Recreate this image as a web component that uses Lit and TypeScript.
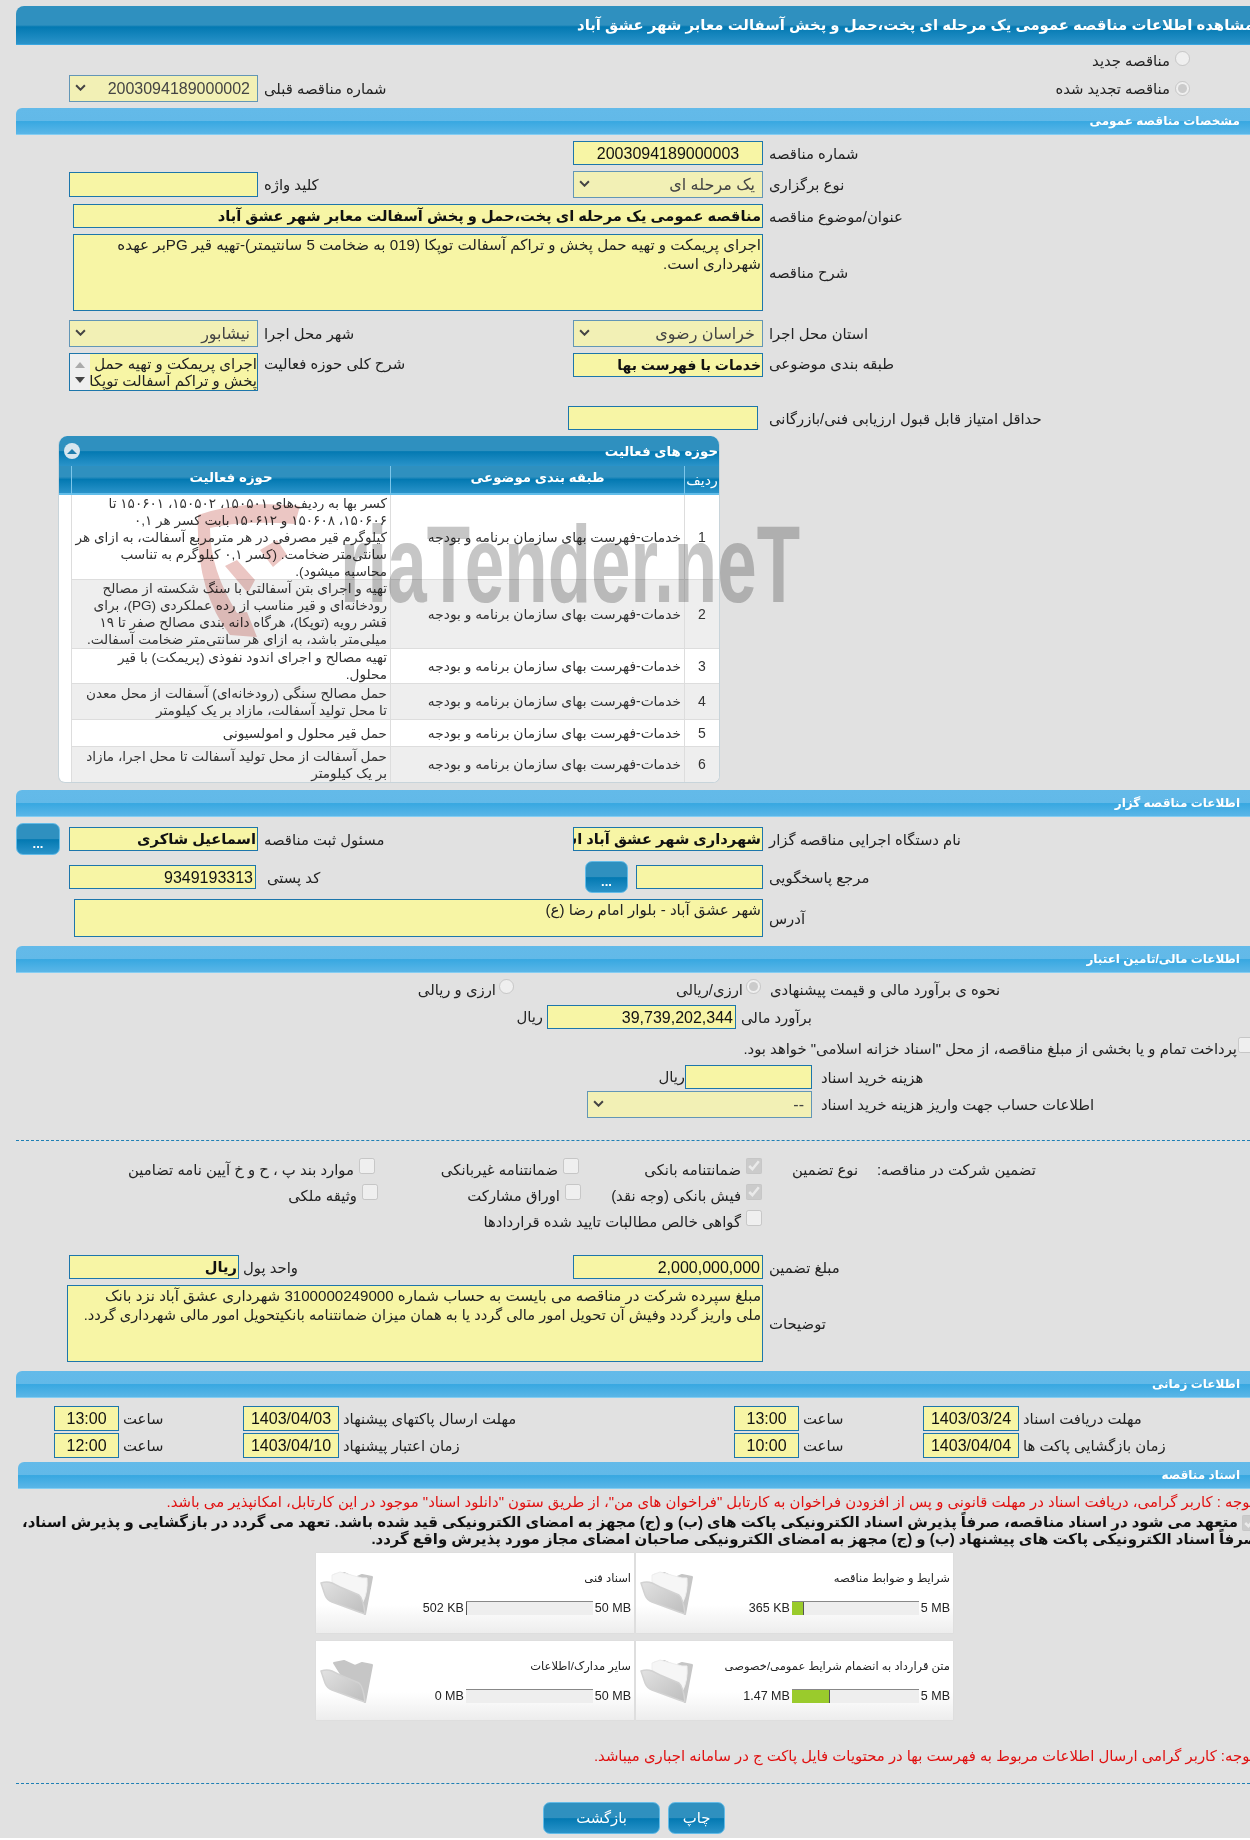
import { LitElement, html, css, svg } from "lit";
import { customElement } from "lit/decorators.js";

const TABLE_ROWS = [
  ["1", "کسر بها به ردیف‌های ۱۵۰۵۰۱، ۱۵۰۵۰۲، ۱۵۰۶۰۱ تا\n۱۵۰۶۰۶، ۱۵۰۶۰۸ و ۱۵۰۶۱۲ بابت کسر هر ۰,۱\nکیلوگرم قیر مصرفی در هر مترمربع آسفالت، به ازای هر\nسانتی‌متر ضخامت. (کسر ۰,۱ کیلوگرم به تناسب\nمحاسبه میشود).", "h85"],
  ["2", "تهیه و اجرای بتن آسفالتی با سنگ شکسته از مصالح\nرودخانه‌ای و قیر مناسب از رده عملکردی (PG)، برای\nقشر رویه (توپکا)، هرگاه دانه بندی مصالح صفر تا ۱۹\nمیلی‌متر باشد، به ازای هر سانتی‌متر ضخامت آسفالت.", "h69"],
  ["3", "تهیه مصالح و اجرای اندود نفوذی (پریمکت) با قیر\nمحلول.", "h35"],
  ["4", "حمل مصالح سنگی (رودخانه‌ای) آسفالت از محل معدن\nتا محل تولید آسفالت، مازاد بر یک کیلومتر", "h36"],
  ["5", "حمل قیر محلول و امولسیونی", "h27"],
  ["6", "حمل آسفالت از محل تولید آسفالت تا محل اجرا، مازاد\nبر یک کیلومتر", "h36"],
];

const DOCS = [
  { title: "شرایط و ضوابط مناقصه", used: "365 KB", max: "5 MB", fill: 12, paper: true },
  { title: "اسناد فنی", used: "502 KB", max: "50 MB", fill: 1, paper: true },
  { title: "متن قرارداد به انضمام شرایط عمومی/خصوصی", used: "1.47 MB", max: "5 MB", fill: 38, paper: true },
  { title: "سایر مدارک/اطلاعات", used: "0 MB", max: "50 MB", fill: 0, paper: false },
];

const folder = (paper: boolean) => svg`
  <svg class="folder" viewBox="-1 -2 54 46" aria-hidden="true">
    <defs>
      <linearGradient id="fg" x1="0" y1="0" x2="1" y2="1">
        <stop offset="0" stop-color="#e2e2e2" /><stop offset="1" stop-color="#bdbdbd" />
      </linearGradient>
    </defs>
    <path d="M13 3 L23 1 L34 6 L41 3 L51 5 L44 42 L30 30 Z" fill="#c6c6c6" stroke="#c6c6c6" stroke-width="2" stroke-linejoin="round" />
    ${paper
      ? svg`<path d="M11 3 L19 0 L41 6 L46 6 Q47 20 42 30 L28 23 L11 10 Z" fill="#f6f6f6" stroke="#eeeeee" stroke-width="1" stroke-linejoin="round" />`
      : svg``}
    <path d="M0 11 Q6 9 11 11 L19 15 L38 23 Q42 26 44 42 L38 40 L11 30 Q6 28 4 23 Z" fill="url(#fg)" stroke="#d2d2d2" stroke-width="1.5" stroke-linejoin="round" />
  </svg>`;

const chevron = html`<svg class="chev" viewBox="0 0 10 6" aria-hidden="true"><path d="M1 1 L5 5 L9 1" fill="none" stroke="#444" stroke-width="1.8" /></svg>`;

@customElement("app-root")
export class AppRoot extends LitElement {
  static styles = css`
    :host { display: block; width: 1250px; height: 1840px; overflow: hidden; background: #fff; font-family: "Liberation Sans", "DejaVu Sans", sans-serif; color: #222; font-size: 14.85px; }
    * { box-sizing: border-box; }
    .page { position: relative; width: 1250px; height: 1838px; padding-top: 6px; background: #e1e1e1; overflow: hidden; }

    .title { height: 39px; margin-left: 16px; display: flex; align-items: center; justify-content: flex-start; direction: rtl; overflow: hidden; border-radius: 8px 0 0 0; color: #fff; font-size: 14.85px; font-weight: bold; white-space: nowrap; border-bottom: 1px solid #39a6e0; background: linear-gradient(#2f90bf 0, #2f90bf 50%, #0379b2 55%, #2a93c9 100%); }
    .title span { margin-right: -4px; padding-bottom: 1px; }
    .bar { height: 27px; margin-left: 16px; display: flex; align-items: center; direction: rtl; padding-right: 10px; border-radius: 6px 0 0 0; color: #fff; font-size: 12px; font-weight: bold; white-space: nowrap; border-bottom: 1px solid #84cdf2; background: linear-gradient(#63bae9 0, #62b9e8 50%, #38a8e1 52%, #5ab6e7 100%); }
    .bar.docs { margin-left: 18px; }

    .row { display: grid; align-items: center; direction: ltr; }
    .top2 { grid-template-columns: 69px 189px 1fr 300px; }
    .std { grid-template-columns: 69px 189px 315px 190px 1fr; }
    .std170 { grid-template-columns: 69px 170px 334px 190px 1fr; }
    .w73 { grid-template-columns: 73px 690px 1fr; }
    .w74 { grid-template-columns: 74px 689px 1fr; }
    .w67 { grid-template-columns: 67px 696px 1fr; }
    .minscore { grid-template-columns: 568px 190px 1fr; }
    .ref { grid-template-columns: 69px 187px 329px 43px 8px 127px 1fr; }
    .radios { grid-template-columns: 514px 247px 1fr; align-items: start; }
    .radios .opt { align-items: flex-start; gap: 3px; }
    .radios span, .radios .lbl { padding-top: 2px; }
    .estimate { grid-template-columns: 547px 189px 1fr; }
    .fee { grid-template-columns: 685px 127px 1fr; }
    .account { grid-template-columns: 587px 225px 1fr; }
    .times { grid-template-columns: 54px 65px 124px 96px 395px 65px 124px 96px 1fr; }
    .g1 { grid-template-columns: 375px 204px 183px 26px 85px 1fr; align-items: start; }
    .g2 { grid-template-columns: 378px 203px 181px 1fr; align-items: start; }
    .g1 .opt, .g2 .opt { align-items: flex-start; }
    .g1 span, .g2 span, .g1 .lbl { padding-top: 3px; }
    .start { align-items: start; }

    .mt2 { margin-top: 2px; } .mt3 { margin-top: 3px; } .mt4 { margin-top: 4px; } .mt5 { margin-top: 5px; } .mt6 { margin-top: 6px; } .mt7 { margin-top: 7px; } .mt8 { margin-top: 8px; } .mt9 { margin-top: 9px; } .mt15 { margin-top: 15px; } .mt17 { margin-top: 17px; } .mt18 { margin-top: 18px; } .mt19 { margin-top: 19px; } .mt22 { margin-top: 22px; } .mt26 { margin-top: 26px; }

    .lbl { direction: rtl; text-align: left; white-space: nowrap; padding-left: 6px; padding-top: 1px; }
    .lbl.p4 { padding-left: 4px; } .lbl.p5 { padding-left: 5px; } .lbl.p9 { padding-left: 9px; } .lbl.p11 { padding-left: 11px; }
    .lbl.top { padding-top: 2px; }
    .rial { direction: rtl; text-align: right; padding-right: 4px; white-space: nowrap; }
    .rial.flush { padding-right: 0; }

    .f { direction: rtl; display: flex; align-items: center; border: 1.5px solid #1d76ab; background: #f7f5a5; color: #111; font-size: 16px; white-space: nowrap; overflow: hidden; padding: 0 1px; line-height: 17px; }
    .f.center { justify-content: center; }
    .f.bold { font-weight: bold; font-size: 14.67px; }
    .f.b14 { font-size: 14px; }
    .f.ltr-num { padding-right: 2px; }
    .h24 { height: 24px; } .h25 { height: 25px; } .h26 { height: 26px; } .h30 { height: 30px; }
    .sel { height: 27px; direction: rtl; display: flex; align-items: center; justify-content: space-between; border: 1.5px solid #6396b6; background: #f2f0b5; color: #444; font-size: 16px; padding: 0 7px 0 5px; white-space: nowrap; }
    .chev { width: 11px; height: 7px; flex: none; margin-bottom: 2px; }
    .area { direction: rtl; border: 1.5px solid #1d76ab; background: #f7f5a5; color: #222; font-size: 15.1px; line-height: 18.5px; padding: 1px; overflow: hidden; white-space: pre; }
    .tight { font-size: 14.6px; }
    .h77 { height: 77px; } .h38 { height: 38px; }
    .listbox { height: 38px; direction: rtl; display: flex; border: 1.5px solid #1d76ab; background: #f7f5a5; overflow: hidden; }
    .listbox .txt { flex: 1; font-size: 15px; line-height: 17px; color: #222; white-space: nowrap; padding: 1px 0 0 0; overflow: hidden; }
    .scroll { width: 20px; flex: none; background: #efefef; display: flex; flex-direction: column; align-items: center; justify-content: space-around; padding: 3px 0; }
    .tri { width: 0; height: 0; border-left: 5px solid transparent; border-right: 5px solid transparent; }
    .tri.up { border-bottom: 6px solid #aaa; }
    .tri.down { border-top: 6px solid #444; }

    .opt { display: flex; justify-content: flex-end; align-items: center; gap: 5px; direction: ltr; white-space: nowrap; }
    .opt span { direction: rtl; }
    .opt.rad { padding-right: 60px; align-items: flex-start; }
    .opt.rad span { padding-top: 7px; }
    .opt.rad input { margin-top: 6px; }
    .opt.renew { padding-right: 60px; }
    .opt.renew span { padding-top: 1px; }
    input { margin: 0; flex: none; width: 15px; height: 15px; }
    input[type="checkbox"] { width: 16px; height: 16px; }
    .treasury { display: flex; justify-content: flex-end; align-items: flex-start; gap: 1px; height: 20px; margin-right: -4px; white-space: nowrap; }
    .treasury span { direction: rtl; padding-top: 3px; }

    .btn { display: flex; align-items: center; justify-content: center; color: #fff; border: 1.5px solid #63bbe7; border-radius: 7px; background: linear-gradient(#2f90bf 0, #2f90bf 50%, #0379b2 52%, #2a93c9 100%); font-size: 14.85px; direction: rtl; }
    .dots { width: 44px; height: 32px; margin-left: 16px; font-weight: bold; font-size: 13px; padding-top: 8px; }
    .ref .dots { margin-left: 0; width: 43px; }

    .dash { height: 0; margin-left: 16px; border-top: 1.5px dashed #1d7fb5; }

    .box { position: relative; width: 662px; height: 347px; margin-left: 58px; background: #fff; border-radius: 9px 9px 7px 7px; border: 1px solid #c8d4da; border-top: 0; overflow: hidden; }
    .boxhead { height: 30px; display: flex; align-items: center; justify-content: space-between; padding: 0 1px 0 5px; direction: ltr; color: #fff; font-weight: bold; font-size: 13.33px; background: linear-gradient(#2f90bf 0, #2f90bf 50%, #0379b2 52%, #2a93c9 100%); }
    .boxhead span { direction: rtl; }
    .toggle { width: 16px; height: 16px; border-radius: 50%; background: #d7e6ef; display: flex; align-items: center; justify-content: center; }
    .toggle i { width: 0; height: 0; border-left: 5px solid transparent; border-right: 5px solid transparent; border-bottom: 5px solid #1f7dad; }
    .tgrid { display: grid; grid-template-columns: 12px 319px 294px 1fr; direction: ltr; }
    .th { height: 29px; display: flex; align-items: center; justify-content: center; color: #fff; font-weight: bold; font-size: 13.33px; padding-bottom: 5px; border-left: 1px solid #7cc6ea; border-bottom: 2px solid #62bde9; background: linear-gradient(#2f90bf 0, #2f90bf 40%, #0379b2 50%, #2a93c9 100%); direction: rtl; }
    .th.first { border-left: 0; }
    .th.no { padding-bottom: 0; font-weight: normal; font-size: 14px; }
    .td { display: flex; align-items: center; direction: rtl; border-left: 1px solid #ddd; border-bottom: 1px solid #ddd; color: #333; font-size: 13.6px; line-height: 17px; padding: 0 3px 0 0; overflow: hidden; white-space: pre; }
    .td.c1 { border-left: 0; background: transparent; border-bottom: 0; }
    .td.num { justify-content: center; font-size: 14px; padding: 0; }
    .td.alt { background: #eeeeee; }
    .td.cat { padding-right: 3px; white-space: nowrap; font-size: 13.8px; }
    .h85 { height: 85px; } .h69 { height: 69px; } .h35 { height: 35px; } .h36 { height: 36px; } .h27 { height: 27px; }

    .wm { position: absolute; left: 195px; top: 500px; width: 620px; height: 140px; mix-blend-mode: multiply; pointer-events: none; display: flex; align-items: flex-start; direction: ltr; }
    .wm svg { width: 125px; height: 140px; flex: none; }
    .wm span { font-size: 110px; line-height: 110px; font-weight: bold; color: #c6c6c6; white-space: nowrap; transform: scaleX(.645); transform-origin: left top; margin-left: 20px; margin-top: 9px; }

    .note { direction: rtl; color: #e01010; font-size: 14.88px; line-height: 20px; white-space: nowrap; margin-right: -4px; }
    .commit { direction: rtl; font-weight: bold; color: #111; font-size: 14.9px; line-height: 17px; margin: 2px -8px 0 20px; }
    .commit input { vertical-align: middle; margin-left: 4px; }
    .cards { display: grid; grid-template-columns: 318px 317px; grid-template-rows: 80px 79px; gap: 8px 2px; margin-left: 316px; direction: ltr; }
    .card { display: grid; grid-template-columns: 60px 1fr; direction: ltr; background: linear-gradient(#fff 0, #fff 65%, #ededed 100%); box-shadow: 0 0 1px #ccc; }
    .folder { width: 54px; height: 48px; margin: 16px 0 0 4px; }
    .cinfo { padding: 17px 3px 0 0; display: flex; flex-direction: column; align-items: flex-end; }
    .ctitle { direction: rtl; font-size: 11.5px; color: #222; line-height: 16px; white-space: nowrap; }
    .pr { margin-top: 15px; display: flex; align-items: center; gap: 2px; font-size: 12.5px; color: #222; }
    .track { width: 127px; height: 14px; background: #eeeeee; border-top: 1px solid #888; display: flex; }
    .fillbar { height: 100%; background: #9acb2c; border-right: 1px solid #555; }
    .actions { display: flex; margin-left: 543px; gap: 8px; direction: ltr; }
    .a1 { width: 117px; height: 32px; } .a2 { width: 57px; height: 32px; }
  `;

  private sel(text: string) {
    return html`<div class="sel"><span>${text}</span>${chevron}</div>`;
  }

  render() {
    return html`
      <div class="page">
        <div class="title"><span>مشاهده اطلاعات مناقصه عمومی یک مرحله ای پخت،حمل و پخش آسفالت معابر شهر عشق آباد</span></div>

        <div class="opt rad h30">
          <span>مناقصه جدید</span><input type="radio" disabled />
        </div>
        <div class="row top2">
          <div></div>
          ${this.sel("2003094189000002")}
          <div class="lbl">شماره مناقصه قبلی</div>
          <div class="opt renew"><span>مناقصه تجدید شده</span><input type="radio" disabled checked /></div>
        </div>

        <div class="bar mt6">مشخصات مناقصه عمومی</div>

        <div class="row std mt6">
          <div></div><div></div><div></div>
          <div class="f center h24">2003094189000003</div>
          <div class="lbl">شماره مناقصه</div>
        </div>
        <div class="row std mt6">
          <div></div>
          <div class="f h25"></div>
          <div class="lbl">کلید واژه</div>
          ${this.sel("یک مرحله ای")}
          <div class="lbl">نوع برگزاری</div>
        </div>
        <div class="row w73 mt6">
          <div></div>
          <div class="f bold h24">مناقصه عمومی یک مرحله ای پخت،حمل و پخش آسفالت معابر شهر عشق آباد</div>
          <div class="lbl">عنوان/موضوع مناقصه</div>
        </div>
        <div class="row w73 mt6">
          <div></div>
          <div class="area h77">${"اجرای پریمکت و تهیه حمل پخش و تراکم آسفالت توپکا (019 به ضخامت 5 سانتیمتر)-تهیه قیر PGبر عهده\nشهرداری است."}</div>
          <div class="lbl">شرح مناقصه</div>
        </div>
        <div class="row std mt9">
          <div></div>
          ${this.sel("نیشابور")}
          <div class="lbl">شهر محل اجرا</div>
          ${this.sel("خراسان رضوی")}
          <div class="lbl">استان محل اجرا</div>
        </div>
        <div class="row std start mt6">
          <div></div>
          <div class="listbox"><div class="txt">اجرای پریمکت و تهیه حمل<br />پخش و تراکم آسفالت توپکا</div><div class="scroll"><i class="tri up"></i><i class="tri down"></i></div></div>
          <div class="lbl top">شرح کلی حوزه فعالیت</div>
          <div class="f bold b14 h24">خدمات با فهرست بها</div>
          <div class="lbl top">طبقه بندی موضوعی</div>
        </div>
        <div class="row minscore mt15">
          <div></div>
          <div class="f h24"></div>
          <div class="lbl p11">حداقل امتیاز قابل قبول ارزیابی فنی/بازرگانی</div>
        </div>

        <div class="box mt6">
          <div class="boxhead"><div class="toggle"><i></i></div><span>حوزه های فعالیت</span></div>
          <div class="tgrid">
            <div class="th first"></div>
            <div class="th">حوزه فعالیت</div>
            <div class="th">طبقه بندی موضوعی</div>
            <div class="th no">ردیف</div>
            ${TABLE_ROWS.map(
              ([n, text, h], i) => html`
                <div class="td c1 ${h}"></div>
                <div class="td ${h} ${i % 2 ? "alt" : ""}"><span>${text}</span></div>
                <div class="td cat ${h} ${i % 2 ? "alt" : ""}">خدمات-فهرست بهای سازمان برنامه و بودجه</div>
                <div class="td num ${h} ${i % 2 ? "alt" : ""}">${n}</div>
              `
            )}
          </div>
        </div>

        <div class="bar mt7">اطلاعات مناقصه گزار</div>
        <div class="row std mt6">
          <div class="btn dots">...</div>
          <div class="f bold h24">اسماعیل شاکری</div>
          <div class="lbl">مسئول ثبت مناقصه</div>
          <div class="f bold h24">شهرداری شهر عشق آباد استان خراسان رضوی</div>
          <div class="lbl">نام دستگاه اجرایی مناقصه گزار</div>
        </div>
        <div class="row ref mt6">
          <div></div>
          <div class="f ltr-num h24">9349193313</div>
          <div class="lbl p11">کد پستی</div>
          <div class="btn dots">...</div>
          <div></div>
          <div class="f h24"></div>
          <div class="lbl">مرجع پاسخگویی</div>
        </div>
        <div class="row w74 mt6">
          <div></div>
          <div class="area h38">شهر عشق آباد - بلوار امام رضا (ع)</div>
          <div class="lbl">آدرس</div>
        </div>

        <div class="bar mt9">اطلاعات مالی/تامین اعتبار</div>
        <div class="row radios mt6 h24">
          <div class="opt"><span>ارزی و ریالی</span><input type="radio" disabled /></div>
          <div class="opt"><span>ارزی/ریالی</span><input type="radio" disabled checked /></div>
          <div class="lbl p9">نحوه ی برآورد مالی و قیمت پیشنهادی</div>
        </div>
        <div class="row estimate mt2">
          <div class="rial">ریال</div>
          <div class="f ltr-num h24">39,739,202,344</div>
          <div class="lbl p5">برآورد مالی</div>
        </div>
        <div class="treasury mt8">
          <span>پرداخت تمام و یا بخشی از مبلغ مناقصه، از محل "اسناد خزانه اسلامی" خواهد بود.</span>
          <input type="checkbox" disabled />
        </div>
        <div class="row fee mt8">
          <div class="rial flush">ریال</div>
          <div class="f h24"></div>
          <div class="lbl p9">هزینه خرید اسناد</div>
        </div>
        <div class="row account mt2">
          <div></div>
          ${this.sel("--")}
          <div class="lbl p9">اطلاعات حساب جهت واریز هزینه خرید اسناد</div>
        </div>

        <div class="dash mt22"></div>

        <div class="row g1 h26 mt17">
          <div class="opt"><span>موارد بند پ ، ح و خ آیین نامه تضامین</span><input type="checkbox" disabled /></div>
          <div class="opt"><span>ضمانتنامه غیربانکی</span><input type="checkbox" disabled /></div>
          <div class="opt"><span>ضمانتنامه بانکی</span><input type="checkbox" disabled checked /></div>
          <div></div>
          <div class="lbl p4">نوع تضمین</div>
          <div class="lbl p4">تضمین شرکت در مناقصه:</div>
        </div>
        <div class="row g2 h26">
          <div class="opt"><span>وثیقه ملکی</span><input type="checkbox" disabled /></div>
          <div class="opt"><span>اوراق مشارکت</span><input type="checkbox" disabled /></div>
          <div class="opt"><span>فیش بانکی (وجه نقد)</span><input type="checkbox" disabled checked /></div>
          <div></div>
        </div>
        <div class="row g2 h26">
          <div></div><div></div>
          <div class="opt"><span>گواهی خالص مطالبات تایید شده قراردادها</span><input type="checkbox" disabled /></div>
          <div></div>
        </div>

        <div class="row std170 mt19">
          <div></div>
          <div class="f bold h24">ریال</div>
          <div class="lbl p4">واحد پول</div>
          <div class="f ltr-num h24">2,000,000,000</div>
          <div class="lbl">مبلغ تضمین</div>
        </div>
        <div class="row w67 mt6">
          <div></div>
          <div class="area h77">مبلغ سپرده شرکت در مناقصه می بایست به حساب شماره 3100000249000 شهرداری عشق آباد نزد بانک<br /><span class="tight">ملی واریز گردد وفیش آن تحویل امور مالی گردد یا به همان میزان ضمانتنامه بانکیتحویل امور مالی شهرداری گردد.</span></div>
          <div class="lbl">توضیحات</div>
        </div>

        <div class="bar mt9">اطلاعات زمانی</div>
        <div class="row times mt8">
          <div></div>
          <div class="f center h25">13:00</div>
          <div class="lbl p4">ساعت</div>
          <div class="f center h25">1403/04/03</div>
          <div class="lbl p4">مهلت ارسال پاکتهای پیشنهاد</div>
          <div class="f center h25">13:00</div>
          <div class="lbl p4">ساعت</div>
          <div class="f center h25">1403/03/24</div>
          <div class="lbl p4">مهلت دریافت اسناد</div>
        </div>
        <div class="row times mt2">
          <div></div>
          <div class="f center h25">12:00</div>
          <div class="lbl p4">ساعت</div>
          <div class="f center h25">1403/04/10</div>
          <div class="lbl p4">زمان اعتبار پیشنهاد</div>
          <div class="f center h25">10:00</div>
          <div class="lbl p4">ساعت</div>
          <div class="f center h25">1403/04/04</div>
          <div class="lbl p4">زمان بازگشایی پاکت ها</div>
        </div>

        <div class="bar docs mt4">اسناد مناقصه</div>
        <div class="note mt3">توجه : کاربر گرامی، دریافت اسناد در مهلت قانونی و پس از افزودن فراخوان به کارتابل "فراخوان های من"، از طریق ستون "دانلود اسناد" موجود در این کارتابل، امکانپذیر می باشد.</div>
        <div class="commit"><input type="checkbox" disabled checked />متعهد می شود در اسناد مناقصه، صرفاً پذیرش اسناد الکترونیکی پاکت های (ب) و (ج) مجهز به امضای الکترونیکی قید شده باشد. تعهد می گردد در بازگشایی و پذیرش اسناد، صرفاً اسناد الکترونیکی پاکت های پیشنهاد (ب) و (ج) مجهز به امضای الکترونیکی صاحبان امضای مجاز مورد پذیرش واقع گردد.</div>

        <div class="cards mt5">
          ${[DOCS[1], DOCS[0], DOCS[3], DOCS[2]].map(
            (d) => html`
              <div class="card">
                ${folder(d.paper)}
                <div class="cinfo">
                  <div class="ctitle">${d.title}</div>
                  <div class="pr">
                    <span>${d.used}</span>
                    <div class="track">${d.fill ? html`<div class="fillbar" style="width:${d.fill}px"></div>` : ""}</div>
                    <span>${d.max}</span>
                  </div>
                </div>
              </div>
            `
          )}
        </div>

        <div class="note mt26">توجه: کاربر گرامی ارسال اطلاعات مربوط به فهرست بها در محتویات فایل پاکت ج در سامانه اجباری میباشد.</div>
        <div class="dash mt17"></div>
        <div class="actions mt18">
          <div class="btn a1">بازگشت</div>
          <div class="btn a2">چاپ</div>
        </div>

        <div class="wm">
          <svg viewBox="0 0 125 140" aria-hidden="true">
            <path d="M3 15 Q45 0 105 6 L100 24 Q50 20 15 28 Q15 70 42 113 L52 112 L62 137 L35 135 Q0 90 3 15 Z" fill="#ebc6c3" />
            <path d="M30 66 L42 60 L60 80 L53 93 Z" fill="#ebc6c3" />
            <path d="M65 50 L78 67 L92 55 L82 40 Z" fill="#ebc6c3" />
          </svg>
          <span>riaTender.neT</span>
        </div>
      </div>
    `;
  }
}
